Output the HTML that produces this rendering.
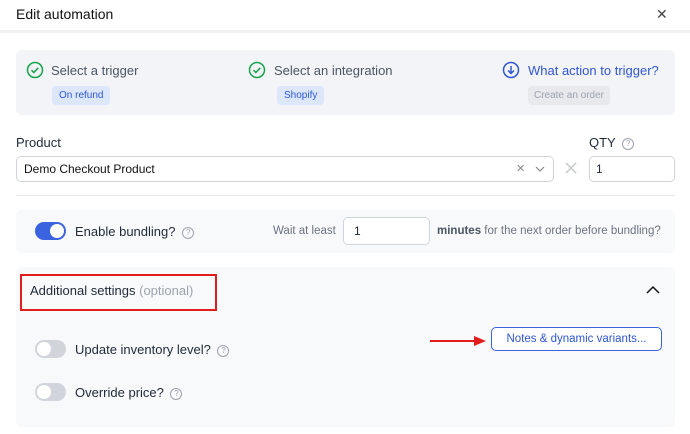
<!DOCTYPE html>
<html><head><meta charset="utf-8"><style>
*{box-sizing:border-box;margin:0;padding:0}
body{width:690px;height:434px;overflow:hidden;background:#fff;font-family:"Liberation Sans",sans-serif;color:#1f2937;position:relative}
.a{position:absolute}
.panel{background:#f3f4f7;border-radius:6px}
.pill{font-size:10px;border-radius:4px;padding:0 7px;line-height:19px;white-space:nowrap}
.inp{background:#fff;border:1px solid #d1d5db;border-radius:5px}
.tg{width:31px;height:18px;border-radius:9px;background:#d1d5db}
.kn{position:absolute;top:2px;left:2px;width:14px;height:14px;border-radius:50%;background:#fff}
.q{display:inline-block;width:12px;height:12px;border:1px solid #9ca3af;border-radius:50%;font-size:8px;line-height:10px;text-align:center;color:#9ca3af;vertical-align:1px;margin-left:3px}
</style></head><body>
<div class="a" style="left:16px;top:6px;font-size:14px;color:#111">Edit automation</div>
<div class="a" style="left:656px;top:6px;font-size:14px;color:#444">✕</div>
<div class="a" style="left:0;top:30px;width:690px;height:3px;background:#f0f1f3"></div>

<div class="a panel" style="left:16px;top:50px;width:659px;height:65px"></div>
<svg class="a" style="left:26px;top:61px" width="18" height="18" viewBox="0 0 18 18"><circle cx="9" cy="9" r="7.5" fill="none" stroke="#16a34a" stroke-width="1.5"/><path d="M5.5 9.2l2.3 2.3 4.5-4.7" fill="none" stroke="#16a34a" stroke-width="1.5"/></svg>
<div class="a" style="left:51px;top:63px;font-size:13px;color:#4b5563">Select a trigger</div>
<div class="a pill" style="left:52px;top:86px;background:#dde7fb;color:#2f56d4">On refund</div>
<svg class="a" style="left:248px;top:61px" width="18" height="18" viewBox="0 0 18 18"><circle cx="9" cy="9" r="7.5" fill="none" stroke="#16a34a" stroke-width="1.5"/><path d="M5.5 9.2l2.3 2.3 4.5-4.7" fill="none" stroke="#16a34a" stroke-width="1.5"/></svg>
<div class="a" style="left:274px;top:63px;font-size:13px;color:#4b5563">Select an integration</div>
<div class="a pill" style="left:277px;top:86px;background:#dde7fb;color:#2f56d4">Shopify</div>
<svg class="a" style="left:502px;top:61px" width="18" height="18" viewBox="0 0 18 18"><circle cx="9" cy="9" r="7.5" fill="none" stroke="#2f56d4" stroke-width="1.5"/><path d="M9 5v7M6 9.5l3 3 3-3" fill="none" stroke="#2f56d4" stroke-width="1.5"/></svg>
<div class="a" style="left:528px;top:63px;font-size:13px;color:#2f56d4">What action to trigger?</div>
<div class="a pill" style="left:528px;top:86px;background:#e8e9ec;color:#9ca3af;width:82px;text-align:center;padding:0">Create an order</div>

<div class="a" style="left:16px;top:135px;font-size:13px">Product</div>
<div class="a" style="left:589px;top:135px;font-size:13px">QTY <span class="q">?</span></div>
<div class="a inp" style="left:16px;top:156px;width:538px;height:26px"></div>
<div class="a" style="left:24px;top:162px;font-size:12px;color:#111">Demo Checkout Product</div>
<div class="a" style="left:516px;top:162px;font-size:11px;color:#888">✕</div>
<svg class="a" style="left:535px;top:165px" width="10" height="8"><path d="M1 2l4 4 4-4" fill="none" stroke="#888" stroke-width="1.2"/></svg>
<svg class="a" style="left:565px;top:162px" width="12" height="12"><path d="M1 1l10 10M11 1L1 11" stroke="#c4c7cc" stroke-width="1.5"/></svg>
<div class="a inp" style="left:589px;top:156px;width:86px;height:26px"></div>
<div class="a" style="left:596px;top:162px;font-size:12px">1</div>
<div class="a" style="left:16px;top:195px;width:659px;height:1px;background:#e5e7eb"></div>

<div class="a panel" style="left:16px;top:210px;width:659px;height:43px;background:#f8f9fb"></div>
<div class="a tg" style="left:35px;top:222px;background:#3b63e0"><div class="kn" style="left:15px"></div></div>
<div class="a" style="left:75px;top:224px;font-size:13px">Enable bundling? <span class="q">?</span></div>
<div class="a" style="left:273px;top:225px;font-size:11.5px;color:#6b7280">Wait at least</div>
<div class="a inp" style="left:343px;top:217px;width:87px;height:28px"></div>
<div class="a" style="left:354px;top:224px;font-size:12px">1</div>
<div class="a" style="left:437px;top:225px;font-size:11.5px;color:#6b7280"><b style="color:#4b5563">minutes</b> for the next order before bundling?</div>

<div class="a panel" style="left:16px;top:267px;width:659px;height:160px;background:#f8f9fb"></div>
<div class="a" style="left:20px;top:274px;width:197px;height:37px;border:2px solid #e11d1d"></div>
<div class="a" style="left:30px;top:283px;font-size:13px">Additional settings <span style="color:#9ca3af">(optional)</span></div>
<svg class="a" style="left:646px;top:285px" width="14" height="9"><path d="M1 8l6-6 6 6" fill="none" stroke="#111" stroke-width="1.5"/></svg>
<div class="a" style="left:491px;top:327px;width:171px;height:24px;border:1px solid #3b63e0;border-radius:5px;background:#fff;font-size:11.5px;color:#2f56d4;text-align:center;line-height:22px">Notes &amp; dynamic variants...</div>
<svg class="a" style="left:428px;top:334px" width="62" height="14"><path d="M2 7h46" stroke="#e11d1d" stroke-width="2"/><path d="M46 2l12 5-12 5z" fill="#e11d1d"/></svg>
<div class="a tg" style="left:35px;top:340px"><div class="kn"></div></div>
<div class="a" style="left:75px;top:342px;font-size:13px">Update inventory level? <span class="q">?</span></div>
<div class="a tg" style="left:35px;top:383px"><div class="kn"></div></div>
<div class="a" style="left:75px;top:385px;font-size:13px">Override price? <span class="q">?</span></div>
</body></html>
